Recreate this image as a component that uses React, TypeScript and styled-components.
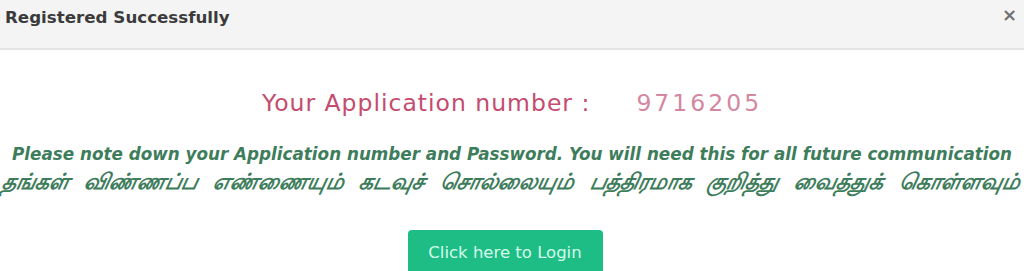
import React from "react";
import styled, { createGlobalStyle } from "styled-components";

const GlobalStyle = createGlobalStyle`
  html, body {
    margin: 0;
    padding: 0;
    background: #ffffff;
    overflow: hidden;
  }
  body {
    font-family: "DejaVu Sans", "Noto Sans", sans-serif;
  }
`;

const Modal = styled.div`
  width: 1024px;
  height: 271px;
  display: flex;
  flex-direction: column;
  background: #ffffff;
  overflow: hidden;
`;

const Header = styled.div`
  height: 48px;
  display: flex;
  align-items: center;
  justify-content: space-between;
  padding: 0 7px 0 5px;
  background: #f4f4f4;
  border-bottom: 2px solid #e3e3e3;
  flex-shrink: 0;
`;

const Title = styled.h4`
  margin: 0 0 14px 0;
  font-size: 16.7px;
  font-weight: 700;
  color: #3b3b3b;
`;

const Close = styled.button`
  border: 0;
  background: transparent;
  padding: 0;
  margin: 0 0 18px 0;
  font-family: "DejaVu Sans", sans-serif;
  font-size: 18px;
  font-weight: 700;
  line-height: 1;
  color: #707070;
  cursor: pointer;
`;

const Body = styled.div`
  display: flex;
  flex-direction: column;
  align-items: center;
  padding-top: 38px;
  text-align: center;
`;

const AppNumber = styled.div`
  font-size: 23.5px;
  letter-spacing: 1px;
  line-height: 30px;
  color: #c44c6f;
  display: flex;
  gap: 46px;
`;

const Number = styled.span`
  color: #d487a0;
  letter-spacing: 3px;
`;

const Note = styled.p`
  margin: 0;
  width: 100%;
  font-size: 16.8px;
  line-height: 28px;
  font-weight: 700;
  font-style: italic;
  color: #3e7d5c;
`;

const TamilNote = styled(Note)`
  white-space: nowrap;
  text-align: left;
  padding-left: 2px;
`;

const Slanted = styled.span`
  display: inline-block;
  font-size: 22px;
  word-spacing: 8px;
  transform: skewX(-12deg);
`;

const Notes = styled.div`
  margin-top: 22px;
  width: 100%;
`;

const LoginButton = styled.button`
  margin: 33px 14px 0 0;
  width: 195px;
  height: 44px;
  border: 0;
  border-radius: 4px;
  background: #1ebd85;
  color: #d6fcec;
  font-family: "DejaVu Sans", sans-serif;
  font-size: 16.5px;
  cursor: pointer;
`;

export default function App() {
  return (
    <>
      <GlobalStyle />
      <Modal>
        <Header>
          <Title>Registered Successfully</Title>
          <Close aria-label="close">×</Close>
        </Header>
        <Body>
          <AppNumber>
            <span>Your Application number :</span>
            <Number>9716205</Number>
          </AppNumber>
          <Notes>
            <Note>
              Please note down your Application number and Password. You will need this for all future communication
            </Note>
            <TamilNote>
              <Slanted>தங்கள் விண்ணப்ப எண்ணையும் கடவுச் சொல்லையும் பத்திரமாக குறித்து வைத்துக் கொள்ளவும்</Slanted>
            </TamilNote>
          </Notes>
          <LoginButton>Click here to Login</LoginButton>
        </Body>
      </Modal>
    </>
  );
}
